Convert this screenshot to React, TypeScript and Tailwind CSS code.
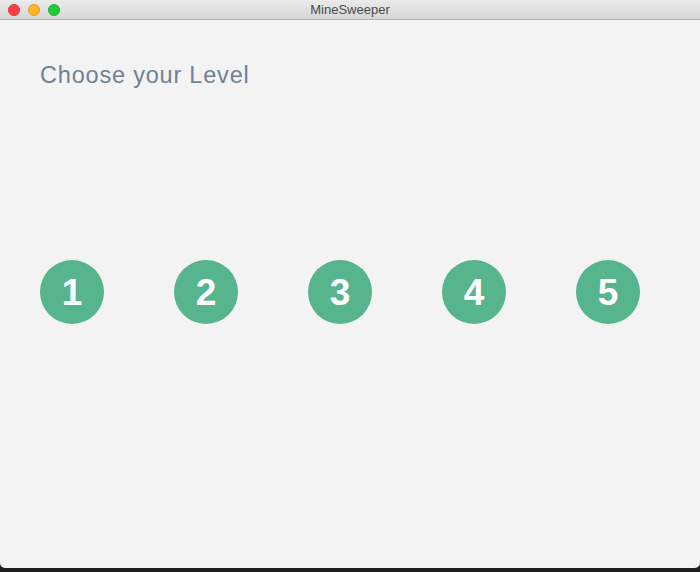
import React from "react";

const LEVELS = [1, 2, 3, 4, 5];

const TitleBar: React.FC = () => {
  return (
    <div className="relative flex h-[20px] items-center border-b border-[#b1b1b1] bg-gradient-to-b from-[#ebebeb] to-[#d5d5d5] px-[8px]">
      <div className="flex gap-[8px]">
        <span className="h-[12px] w-[12px] rounded-full bg-[#fc3d41] border border-[#e0343a]" />
        <span className="h-[12px] w-[12px] rounded-full bg-[#fdb425] border border-[#dfa021]" />
        <span className="h-[12px] w-[12px] rounded-full bg-[#1fcb36] border border-[#1aae2d]" />
      </div>
      <div className="absolute inset-0 flex items-center justify-center text-[13px] text-[#4a4a4a]">
        MineSweeper
      </div>
    </div>
  );
};

export default function App() {
  return (
    <div
      className="flex h-[572px] w-[700px] flex-col bg-[#1e1e1e]"
      style={{ fontFamily: "'Liberation Sans', Arial, sans-serif" }}
    >
      <div className="flex h-[568px] flex-col overflow-hidden rounded-b-[5px] bg-[#f3f3f3]">
        <TitleBar />
        <div className="flex flex-1 flex-col px-[40px] pt-[38px]">
          <h1 className="text-[23.5px] leading-[34px] tracking-[0.8px] text-[#6f8194]">
            Choose your Level
          </h1>
          <div className="mt-[168px] flex gap-[70px]">
            {LEVELS.map((n) => (
              <button
                key={n}
                className="flex h-[64px] w-[64px] items-center justify-center rounded-full bg-[#57b58e] pt-[1px] text-[37px] font-bold text-white"
              >
                {n}
              </button>
            ))}
          </div>
        </div>
      </div>
    </div>
  );
}
